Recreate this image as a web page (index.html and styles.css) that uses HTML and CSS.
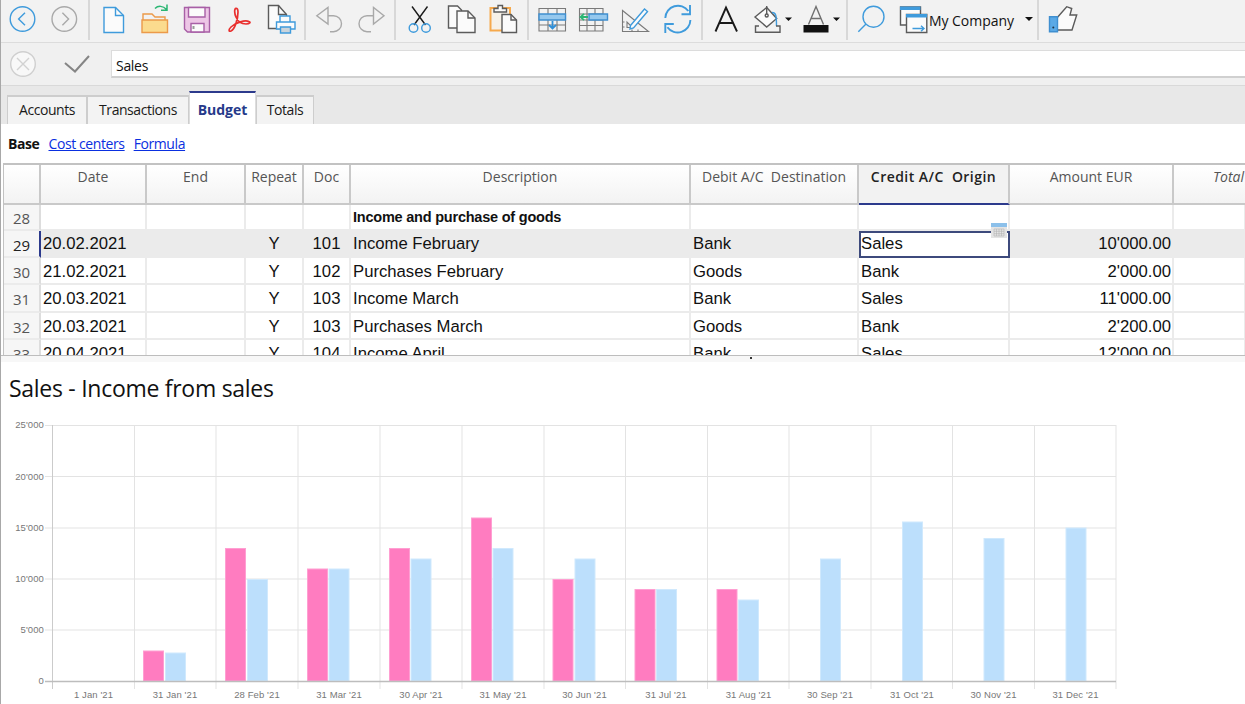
FILE: index.html
```html
<!DOCTYPE html>
<html lang="en">
<head>
<meta charset="utf-8">
<title>Budget</title>
<link rel="stylesheet" href="styles.css">
</head>
<body>
<div class="app">
  <header class="toolbar">
    <button class="tool"><svg class="ico" viewBox="1 0 42 42"><circle class="blue" cx="22.5" cy="19" r="12.3"/><path class="blue" d="M25 12.7 18.6 19l6.4 6.3"/></svg></button>
    <button class="tool"><svg class="ico" viewBox="43 0 42 42"><circle class="mute" cx="64.3" cy="19" r="12.3"/><path class="mute" d="M62.4 12.7 68.6 19l-6.2 6.3"/></svg></button>
    <span class="sep"></span>
    <button class="tool"><svg class="ico" viewBox="93 0 42 42"><path class="blue doc" d="M104 7.5h11.5l8 8v17H104z"/><path class="blue" d="M115.500 7.500v8h8"/></svg></button>
    <button class="tool"><svg class="ico" viewBox="135 0 42 42"><path class="orange" d="M143 20v-6h9l3 3h10v3"/><path class="orange folder" d="M142 20h25.500v12.500H142z"/><path class="green" d="M155 8.500c3-3 8-3 11.500 1M167 4.500v5.800h-6"/></svg></button>
    <button class="tool"><svg class="ico" viewBox="177 0 42 42"><path class="purple disk" d="M184.500 7.500h25v24.500h-22l-3-3z"/><path class="purple doc" d="M188.500 7.500H205v9.500h-16.500zM191 23.500h13V32h-13z"/><path class="greyline" d="M193.500 26v3"/></svg></button>
    <button class="tool"><svg class="ico" viewBox="219 0 42 42"><path class="red" d="M236 8.300c-2 .2-1.500 5.700 0 8.700 2 5 6 7 10 7 4 0 5-2 3-2.500-4-1.500-13 .5-18 5.500-3 3-2 5 0 4 4-2 7-12 7-19 0-3-1-3.800-2-3.700z"/></svg></button>
    <button class="tool"><svg class="ico" viewBox="261 0 42 42"><path class="dark doc" d="M268.500 5.500h10l8 9v14h-18z"/><path class="dark" d="M278.500 5.500v9h8"/><path class="blue doc" d="M280 16h10v6h-10zM276.500 22h18.500v7h-18.500z"/><path class="blue tray" d="M280.500 27h10v6h-10z"/></svg></button>
    <span class="sep sep-narrow"></span>
    <button class="tool"><svg class="ico" viewBox="307 0 42 42"><path class="mute" d="M316.800 15.700 328 7.500V24zM328 15.700h5.500a8 8 0 0 1 0 16H330"/></svg></button>
    <button class="tool"><svg class="ico" viewBox="349 0 42 42"><path class="mute" d="M384 15.700 373.500 7.500V24zM373.500 15.700H367a8 8 0 0 0 0 16h4"/></svg></button>
    <span class="sep"></span>
    <button class="tool"><svg class="ico" viewBox="399 0 42 42"><path class="ink" d="M412 6.500 425.500 25M427.500 6.500 414 25"/><circle class="blue" cx="413.500" cy="28" r="4.300"/><circle class="blue" cx="426" cy="28" r="4.300"/></svg></button>
    <button class="tool"><svg class="ico" viewBox="441 0 42 42"><path class="dark doc" d="M448.500 6h9l4 4v18h-13z"/><path class="dark doc" d="M457 11h11l7 7v14.500h-18z"/><path class="dark" d="M468 11v7h7"/></svg></button>
    <button class="tool"><svg class="ico" viewBox="483 0 42 42"><path class="orange-line" d="M490.500 8h19.500v22.500h-19.500z"/><path class="dark doc" d="M494 12V8.500h4V5.500h4.500v3h4V12z"/><path class="dark doc" d="M502 14.500h9l5.500 5.500v12.500H502z"/><path class="dark" d="M511 14.500V20h5.500"/></svg></button>
    <span class="sep sep-mid"></span>
    <button class="tool"><svg class="ico" viewBox="531 0 42 42"><path class="grid" d="M539 8.500h26.500V31H539zM539 25h26.500M548 8.500V31M557 8.500V31"/><path class="band" d="M539 14h26.500v6H539z"/><path class="blue-solid" d="M552.500 21v6M549 25l3.500 3.500L556 25"/></svg></button>
    <button class="tool"><svg class="ico" viewBox="573 0 42 42"><path class="grid" d="M579.500 8.500H603V31h-23.500zM579.500 14h23.500M579.500 20h23.500M579.500 25.500h23.500M587 8.500V31M595 8.500V31"/><path class="band" d="M589 14h18.500v6H589z"/><path class="green-solid" d="M588 17h-7M584 13.800 580.500 17l3.500 3.200"/></svg></button>
    <button class="tool"><svg class="ico" viewBox="615 0 42 42"><path class="grid" d="M622.500 10.500v21h26zM627 22v5.500h5.500z"/><path class="grid" d="M622.500 27h2M622.500 22h2M632 31.500v-2M638 31.500v-2"/><path class="blue doc" d="M630.500 25.500 644.500 9l3 2.500-14 16.500-3.500 1z"/></svg></button>
    <button class="tool"><svg class="ico" viewBox="657 0 42 42"><path class="blue thick" d="M665.300 18a12.700 12.700 0 0 1 23-7M690 5v9.300h-8.500M690.400 20a12.700 12.700 0 0 1-23 7.200M665.300 33v-9h8.500"/></svg></button>
    <span class="sep sep-mid"></span>
    <button class="tool"><svg class="ico" viewBox="705 0 42 42"><path class="ink thick" d="M715.500 31.500 726 7.500l11 24M719 23h14.500"/></svg></button>
    <button class="tool tool-wide"><svg class="ico ico-wide" viewBox="747 0 50 42"><path class="dark doc" d="M755 17l11.700-9.500 10 11L766.700 27z"/><path class="dark" d="M766.700 6v8"/><circle class="dark" cx="766.700" cy="15.500" r="1.500"/><path class="blue" d="M772 12.500c4 0 4.500 3 4.500 13.500"/><path class="dark" d="M759 26h-3.500v6.300H780V26h-4"/><path class="caret" d="M785 17.500h7l-3.500 3.500z"/></svg></button>
    <button class="tool tool-font"><svg class="ico ico-font" viewBox="797 0 46 42"><path class="grey-a" d="M808.500 24.500 816 6.500l7.500 18M811 18.500h10"/><path class="caret" d="M803.500 25h25v7.500h-25zM833 17.500h7l-3.500 3.500z"/></svg></button>
    <span class="sep sep-end"></span>
    <button class="tool tool-search"><svg class="ico ico-search" viewBox="851 0 42 42"><circle class="blue" cx="873.500" cy="16.700" r="10.500"/><path class="blue" d="M866 24 858.300 31.700"/></svg></button>
    <button class="company">
      <svg class="ico-win" viewBox="897 0 32 42"><path class="dark doc" d="M900.500 7h20v18h-20z"/><path class="band-solid" d="M900 6.500h20.500v3.500H900z"/><path class="dark doc" d="M906.500 14.500h20.300v18h-20.300z"/><path class="band-solid" d="M906 14h21v3.500h-21z"/><path class="blue" d="M912.500 28.500h11M921 25.800l3 2.700-3 2.700"/></svg>
      <span class="company-name">My Company</span>
      <svg class="ico-caret" viewBox="0 0 8 4"><path class="caret" d="M0 0h8L4 4z"/></svg>
    </button>
    <span class="sep sep-like"></span>
    <button class="tool"><svg class="ico" viewBox="1042 0 42 42"><path class="dark doc" d="M1057.300 17.500 1066.700 6.700l5 1.800-1.700 6.500h6.700L1072 30h-14.700z"/><path class="cuff" d="M1049.500 16.700h8v15h-8z"/><circle class="cuff-dot" cx="1053.300" cy="27.500" r="1"/></svg></button>
  </header>

  <div class="formula">
    <svg class="f-cancel" viewBox="0 0 28 28"><circle class="c-ring" cx="14" cy="14" r="12.300"/><path class="c-x" d="M8 8l12 12M20 8 8 20"/></svg>
    <svg class="f-ok" viewBox="0 0 28 20"><path class="c-ok" d="M2 9l10 8.500L26 2"/></svg>
    <div class="f-input">Sales</div>
  </div>

  <nav class="tabs">
    <a class="tab tab-a">Accounts</a>
    <a class="tab tab-t">Transactions</a>
    <a class="tab tab-b active">Budget</a>
    <a class="tab tab-o">Totals</a>
  </nav>

  <div class="views">
    <b class="view-base">Base</b>
    <a class="view-link">Cost centers</a>
    <a class="view-link">Formula</a>
  </div>

  <div class="grid-wrap">
    <table class="sheet">
      <colgroup>
        <col class="c0"><col class="c1"><col class="c2"><col class="c3"><col class="c4"><col class="c5"><col class="c6"><col class="c7"><col class="c8"><col class="c9">
      </colgroup>
      <thead>
        <tr class="head">
          <th></th><th>Date</th><th>End</th><th>Repeat</th><th>Doc</th><th>Description</th>
          <th>Debit A/C&nbsp; Destination</th><th class="cur-col">Credit A/C&nbsp; Origin</th><th>Amount EUR</th><th class="th-total">Total</th>
        </tr>
      </thead>
      <tbody>
        <tr class="r28"><th class="num">28</th><td></td><td></td><td></td><td></td><td class="title-cell">Income and purchase of goods</td><td></td><td></td><td></td><td></td></tr>
        <tr class="rc cur"><th class="num cur-num">29</th><td>20.02.2021</td><td></td><td class="ctr">Y</td><td class="ctr">101</td><td>Income February</td><td>Bank</td><td class="editor">Sales<svg class="cal" viewBox="0 0 16 15"><path class="cal-top" d="M0 0h16v4H0z"/><path class="cal-body" d="M0 4h16v11H0z"/><path class="cal-grid" d="M3 6h10v7H3zM3 8.300h10M3 10.700h10M5.500 6v7M8 6v7M10.500 6v7"/></svg></td><td class="num-r">10'000.00</td><td></td></tr>
        <tr class="rs"><th class="num">30</th><td>21.02.2021</td><td></td><td class="ctr">Y</td><td class="ctr">102</td><td>Purchases February</td><td>Goods</td><td>Bank</td><td class="num-r">2'000.00</td><td></td></tr>
        <tr class="rh"><th class="num">31</th><td>20.03.2021</td><td></td><td class="ctr">Y</td><td class="ctr">103</td><td>Income March</td><td>Bank</td><td>Sales</td><td class="num-r">11'000.00</td><td></td></tr>
        <tr class="rs"><th class="num">32</th><td>20.03.2021</td><td></td><td class="ctr">Y</td><td class="ctr">103</td><td>Purchases March</td><td>Goods</td><td>Bank</td><td class="num-r">2'200.00</td><td></td></tr>
        <tr class="rh"><th class="num">33</th><td>20.04.2021</td><td></td><td class="ctr">Y</td><td class="ctr">104</td><td>Income April</td><td>Bank</td><td>Sales</td><td class="num-r">12'000.00</td><td></td></tr>
      </tbody>
    </table>
  </div>
  <div class="splitter"><span class="grip"></span></div>

  <section class="chart">
    <h1 class="chart-title">Sales - Income from sales</h1>
    <svg class="plot" viewBox="0 402 1245 302">
      <g class="gl">
        <path d="M45 425.500H1116M45 476.500H1116M45 528H1116M45 579H1116M45 630H1116"/>
        <path d="M134.500 425V689M216 425V689M298 425V689M380 425V689M462 425V689M544 425V689M625.500 425V689M707.500 425V689M789 425V689M871 425V689M952.500 425V689M1034.500 425V689M1116 425V689"/>
      </g>
      <path class="ax-l" d="M52.500 425V689"/>
      <g class="pink">
        <rect x="143.500" y="651" width="20" height="30"/>
        <rect x="225.500" y="548.500" width="20" height="132.500"/>
        <rect x="307.500" y="569" width="20" height="112"/>
        <rect x="389.500" y="548.500" width="20" height="132.500"/>
        <rect x="471.500" y="518" width="20" height="163"/>
        <rect x="553" y="579.500" width="20" height="101.500"/>
        <rect x="635" y="589.500" width="20" height="91.500"/>
        <rect x="717" y="589.500" width="20" height="91.500"/>
      </g>
      <g class="sky">
        <rect x="165.500" y="653" width="20" height="28"/>
        <rect x="247.500" y="579.500" width="20" height="101.500"/>
        <rect x="329" y="569" width="20" height="112"/>
        <rect x="411" y="559" width="20" height="122"/>
        <rect x="493" y="548.500" width="20" height="132.500"/>
        <rect x="575" y="559" width="20" height="122"/>
        <rect x="656.500" y="589.500" width="20" height="91.500"/>
        <rect x="738.500" y="600" width="20" height="81"/>
        <rect x="820.500" y="559" width="20" height="122"/>
        <rect x="902.500" y="522" width="20" height="159"/>
        <rect x="984" y="538.500" width="20" height="142.500"/>
        <rect x="1066" y="528" width="20" height="153"/>
      </g>
      <path class="axis" d="M45 681.500H1116"/>
      <g class="yl">
        <text x="44" y="428">25'000</text>
        <text x="44" y="479.500">20'000</text>
        <text x="44" y="531">15'000</text>
        <text x="44" y="582">10'000</text>
        <text x="44" y="633">5'000</text>
        <text x="44" y="684">0</text>
      </g>
      <g class="xl">
        <text x="93.500" y="698">1 Jan '21</text>
        <text x="175" y="698">31 Jan '21</text>
        <text x="257" y="698">28 Feb '21</text>
        <text x="339" y="698">31 Mar '21</text>
        <text x="421" y="698">30 Apr '21</text>
        <text x="503" y="698">31 May '21</text>
        <text x="584.500" y="698">30 Jun '21</text>
        <text x="666" y="698">31 Jul '21</text>
        <text x="748.500" y="698">31 Aug '21</text>
        <text x="830" y="698">30 Sep '21</text>
        <text x="912" y="698">31 Oct '21</text>
        <text x="993.500" y="698">30 Nov '21</text>
        <text x="1075.500" y="698">31 Dec '21</text>
      </g>
    </svg>
  </section>
</div>
</body>
</html>
```

FILE: styles.css
```css
* { box-sizing: border-box; }
html, body { margin: 0; padding: 0; background: #fff; }
body { width: 1245px; height: 704px; overflow: hidden; font-family: "Open Sans", "Noto Sans", sans-serif; color: #111; }
.app { width: 1245px; height: 704px; display: flex; flex-direction: column; border-left: 1px solid #a8a8a8; overflow: hidden; }

/* toolbar */
.toolbar { flex: none; height: 43px; display: flex; align-items: flex-start; background: #f2f2f2; border-bottom: 1px solid #dcdcdc; }
.tool, .company { flex: none; padding: 0; border: 0; background: none; font: inherit; color: inherit; display: block; }
.tool { width: 42px; height: 42px; }
.tool-wide { width: 50px; }
.tool-font { width: 46px; }
.ico { display: block; width: 42px; height: 42px; }
.ico-wide { width: 50px; }
.ico-font { width: 46px; }
.sep { flex: none; width: 8px; height: 40px; position: relative; }
.sep::after { content: ""; display: block; width: 2px; height: 40px; margin-left: 3px; background: #d8d8d8; }
.sep-narrow { width: 4px; }
.sep-narrow::after { margin-left: 1px; }
.sep-mid { width: 6px; }
.sep-mid::after { margin-left: 2px; }
.sep-end { width: 8px; }
.sep-like { width: 6px; }
.sep-like::after { margin-left: 1px; }
.tool-search { width: 42px; }
.company { height: 42px; width: 139px; display: flex; justify-content: flex-start; align-items: center; margin-left: 4px; }
.ico-win { flex: none; width: 32px; height: 42px; }
.company-name { flex: none; width: 96px; font-size: 14px; letter-spacing: -.05px; white-space: nowrap; padding-bottom: 1px; text-align: left; }
.ico-caret { flex: none; width: 8px; height: 4px; margin-bottom: 5px; }

/* icon strokes */
svg path, svg circle { fill: none; stroke-width: 1.4; }
.blue { stroke: #3f9bdc; }
.thick { stroke-width: 1.9; }
.mute { stroke: #a9a9a9; }
.doc { fill: #fbfbfb; }
.orange { stroke: #ec9a4a; }
.orange.folder { fill: #fbdb8e; }
.orange-line { stroke: #f6a94c; stroke-width: 2; fill: #f6f1e8; }
.green { stroke: #2bb673; stroke-width: 1.5; }
.purple { stroke: #a85fa6; }
.purple.disk { fill: #edc6e6; }
.greyline { stroke: #999; stroke-width: 2; }
.red { stroke: #e9302f; stroke-width: 1.7; }
.dark { stroke: #5b5b5b; }
.tray { fill: #c9d4dc; }
.ink { stroke: #1a1a1a; }
.grid { stroke: #7a7a7a; stroke-width: 1.1; }
.band { fill: #95c8ee; stroke: #3f8fd0; }
.blue-solid { stroke: #2f8fd8; stroke-width: 1.8; }
.green-solid { stroke: #2bb673; stroke-width: 1.8; }
.grey-a { stroke: #707070; stroke-width: 1.4; }
svg path.caret { fill: #111; stroke: none; }
svg path.band-solid { fill: #3f9bdc; stroke: none; }
svg path.cuff { fill: #5aa9e6; stroke: #3f8fd0; }
svg circle.cuff-dot { fill: #234; stroke: none; }

/* formula bar */
.formula { flex: none; height: 43px; display: flex; align-items: flex-start; background: #f0f0f0; border-bottom: 1px solid #d9d9d9; padding-top: 7px; }
.f-cancel { flex: none; width: 28px; height: 28px; margin-left: 8px; margin-top: 0; }
.c-ring { fill: #f8f8f8; stroke: #cfcfcf; }
.c-x { stroke: #d2d2d2; }
.f-ok { flex: none; width: 28px; height: 20px; margin-left: 26px; margin-top: 4px; }
svg path.c-ok { stroke: #858585; stroke-width: 2; }
.f-input { flex: 1; margin-left: 20px; height: 28px; background: #fff; border-top: 1px solid #dcdcdc; border-left: 1px solid #dcdcdc; border-bottom: 2px solid #d0d0d0; font-size: 14px; letter-spacing: -.3px; line-height: 29px; padding-left: 4px; }

/* tabs */
.tabs { flex: none; height: 38px; display: flex; align-items: flex-end; background: #e8e8e8; padding-left: 6px; }
.tab { display: block; height: 29px; background: #f3f3f3; border: 1px solid #cdcdcd; border-width: 2px 1px 0; font-size: 14px; letter-spacing: -.45px; line-height: 26px; text-align: center; color: #1a1a1a; }
.tab-a { width: 80px; }
.tab-t { width: 102px; }
.tab-b { width: 67px; }
.tab-o { width: 58px; }
.tab.active { height: 33px; background: #fff; border-top: 2px solid #2c3a8c; border-left-color: #ddd; border-right-color: #ddd; color: #263a8a; font-weight: 700; letter-spacing: 0; line-height: 33px; }

/* view links */
.views { flex: none; height: 39px; background: #fff; display: flex; align-items: center; gap: 9px; padding: 0 0 0 7px; font-size: 14px; letter-spacing: -.4px; }
.view-base { font-weight: 700; color: #111; }
.view-link { color: #0a2fe0; text-decoration: underline; }

/* table */
.grid-wrap { flex: none; height: 193px; overflow: hidden; padding-left: 2px; border-bottom: 1px solid #bdbdbd; background: #fff; }
.sheet { table-layout: fixed; width: 1242px; border-collapse: separate; border-spacing: 0; border-top: 2px solid #c2c2c2; border-left: 1px solid #c2c2c2; }
.c0 { width: 37px; }
.c1 { width: 106px; }
.c2 { width: 99px; }
.c3 { width: 58px; }
.c4 { width: 47px; }
.c5 { width: 340px; }
.c6 { width: 168px; }
.c7 { width: 151px; }
.c8 { width: 164px; }
.c9 { width: 72px; }
.head th { height: 40px; vertical-align: top; padding: 2px 0 0; font-weight: 400; font-size: 14px; color: #555; text-align: center; white-space: nowrap; background: linear-gradient(#fff, #f3f3f3); border-right: 2px solid #c9c9c9; border-bottom: 2px solid #c9c9c9; overflow: hidden; }
.head th.cur-col { background: #f2f2f2; color: #222; font-weight: 600; letter-spacing: .45px; border-bottom: 2px solid #2c3a8c; }
.head th.th-total { font-style: italic; text-align: right; border-right: 0; padding-right: 2px; }
tbody td, tbody th { padding: 0 0 0 2px; font-family: "Liberation Sans", Arial, sans-serif; font-size: 16.700px; font-weight: 400; color: #111; border-right: 2px solid #ebebeb; border-bottom: 2px solid #ebebeb; white-space: nowrap; overflow: hidden; position: relative; }
tbody tr.r28 > * { height: 26px; }
tbody tr.rc > * { height: 27px; padding-top: 1px; }
tbody tr.rh > * { height: 28px; padding-top: 2px; }
tbody tr.rs > * { height: 27px; padding-top: 2px; }
tbody tr > th.num { background: #f6f6f6; font-family: "Open Sans", sans-serif; font-size: 15px; color: #555; text-align: center; padding: 2px 0 0; border-right-color: #ddd; }
tbody tr > th.cur-num { color: #222; border-right: 2px solid #2c3a8c; }
tr.cur > td { background: #ebebeb; }
td.ctr { text-align: center; padding-left: 0; }
tbody td.num-r { text-align: right; padding-right: 1px; padding-left: 0; }
td.title-cell { font-family: "Liberation Sans", Arial, sans-serif; font-weight: 700; font-size: 14.500px; letter-spacing: -.22px; }
tr.cur > td.editor { background: #fff; outline: 2px solid #3d4a7c; outline-offset: -2px; overflow: visible; z-index: 1; }
.cal { position: absolute; right: 1px; top: -8px; width: 16px; height: 15px; }
svg path.cal-top { fill: #8cc0ea; stroke: none; }
svg path.cal-body { fill: #e4e4e4; stroke: none; }
svg path.cal-grid { stroke: #b4b4b4; stroke-width: .6; }

.splitter { flex: none; height: 6px; background: #f7f7f7; position: relative; }
.grip { position: absolute; left: 749px; top: 1px; width: 2px; height: 2px; background: #333; }

/* chart */
.chart { flex: 1; background: #fff; display: flex; flex-direction: column; min-height: 0; }
.chart-title { flex: none; margin: 0; height: 40px; padding: 11px 0 0 8px; font-size: 23px; letter-spacing: -.28px; font-weight: 400; line-height: 30px; color: #111; }
.plot { flex: none; display: block; width: 1245px; height: 302px; margin-left: -1px; }
.gl path { stroke: #e3e3e3; stroke-width: 1; }
svg path.ax-l { stroke: #cbcbcb; stroke-width: 1; }
svg path.axis { stroke: #bdbdbd; stroke-width: 1.600; }
.pink rect { fill: #ff7cc0; stroke: #ff9fd2; stroke-width: 1; }
.sky rect { fill: #bcdffc; stroke: #d0e9fd; stroke-width: 1; }
.yl text, .xl text { font-family: "Liberation Sans", Arial, sans-serif; font-size: 9.500px; fill: #777; letter-spacing: .1px; }
.yl text { text-anchor: end; }
.xl text { text-anchor: middle; }
```
